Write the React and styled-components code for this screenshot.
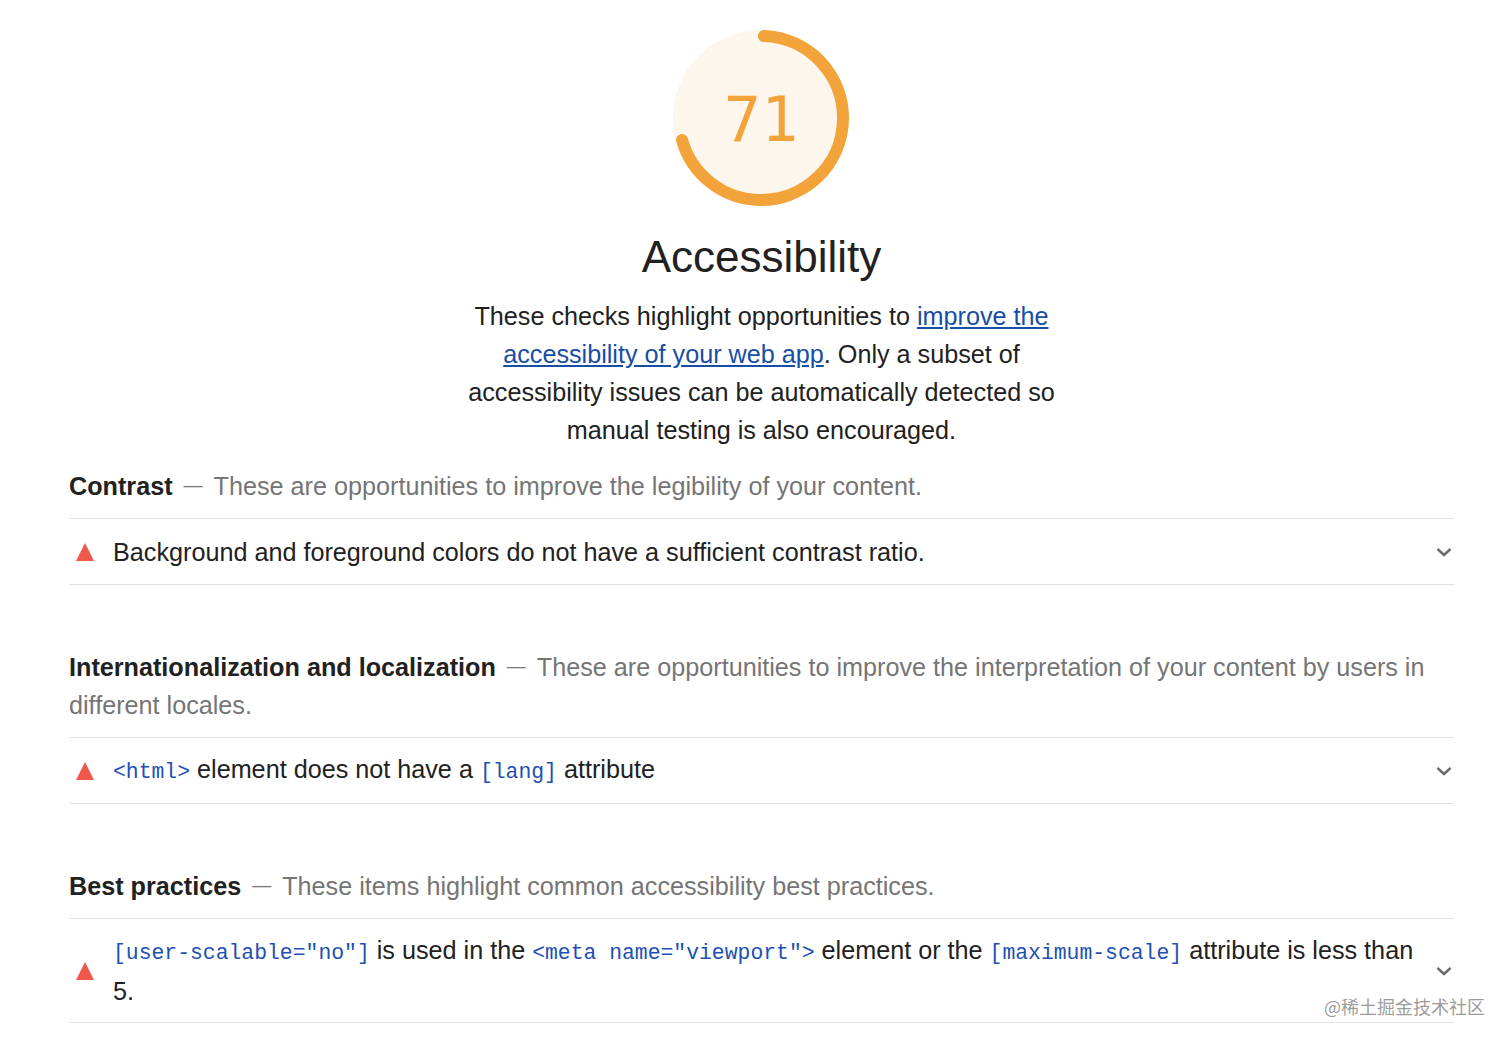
import React from "react";
import styled, { createGlobalStyle } from "styled-components";

const Global = createGlobalStyle`
  html, body { margin: 0; padding: 0; background: #fff; }
  body { font-family: "Liberation Sans", Arial, sans-serif; color: #212121; }
`;

const Page = styled.main`
  position: relative;
  box-sizing: border-box;
  width: 1512px;
  height: 1045px;
  overflow: hidden;
  padding: 29px 58px 0 69px;
  font-size: 25.2px;
  line-height: 38px;
`;

const Header = styled.header`
  display: flex;
  flex-direction: column;
  align-items: center;
  margin-bottom: 18px;
`;

const Gauge = styled.div`
  position: relative;
  width: 178px;
  height: 178px;
  margin-right: 2px;
`;

const GaugeValue = styled.div`
  position: absolute;
  inset: 0;
  display: flex;
  align-items: center;
  justify-content: center;
  padding: 3px 0 0 1px;
  font-family: "DejaVu Sans Mono", monospace;
  font-size: 62px;
  line-height: 1;
  color: #f2a33a;
`;

const Title = styled.h1`
  margin: 24px 0 0;
  font-size: 44px;
  font-weight: 400;
  line-height: 52px;
  color: #212121;
`;

const Description = styled.p`
  margin: 14px 0 0;
  width: 600px;
  text-align: center;
`;

const Link = styled.a`
  color: #174ea6;
  text-decoration: underline;
`;

const Section = styled.section`
  margin-bottom: 63px;
`;

const SectionHead = styled.div`
  padding-bottom: 13px;
  border-bottom: 1px solid #e0e0e0;
`;

const SectionName = styled.strong`
  font-weight: 700;
  color: #212121;
`;

const Dash = styled.span`
  display: inline-block;
  margin: 0 11px;
  font-size: 19px;
  line-height: 1;
  vertical-align: 4px;
  color: #757575;
`;

const SectionNote = styled.span`
  color: #757575;
`;

const Row = styled.div`
  display: flex;
  align-items: center;
  padding: ${(p) => (p.$hasCode ? "12px 0 12px" : "14px 0 13px")};
  border-bottom: 1px solid #e0e0e0;
`;

const Warn = styled.svg`
  flex: none;
  width: 18px;
  height: 18px;
  margin: 0 19px 0 7px;
`;

const RowText = styled.div`
  flex: 1;
  padding-right: 15px;
`;

const Code = styled.code`
  font-family: "Liberation Mono", monospace;
  font-size: 21.4px;
  color: #1c50b4;
`;

const Chevron = styled.svg`
  flex: none;
  width: 20px;
`;

const Watermark = styled.div`
  position: absolute;
  right: 27px;
  top: 994px;
  font-family: "Noto Sans CJK SC", sans-serif;
  font-size: 18px;
  line-height: 24px;
  color: rgba(110, 110, 110, 0.7);
`;

const Triangle = () => (
  <Warn viewBox="0 0 18 18"><polygon points="9,0 18,18 0,18" fill="#f0584c" /></Warn>
);

const Caret = () => (
  <Chevron viewBox="0 0 20 20" height="20">
    <path d="M3.5 7l6.5 6 6.5-6" fill="none" stroke="#6a6a6a" strokeWidth="2.4" />
  </Chevron>
);

export default function App() {
  return (
    <Page>
      <Global />
      <Header>
        <Gauge>
          <svg width="178" height="178" viewBox="0 0 178 178">
            <circle cx="89" cy="89" r="88" fill="#fdf6ec" />
            <circle
              cx="89"
              cy="89"
              r="82"
              fill="none"
              stroke="#f2a33a"
              strokeWidth="12"
              strokeLinecap="round"
              strokeDasharray={`${2 * Math.PI * 82 * 0.7} 1000`}
              transform="rotate(-88 89 89)"
            />
          </svg>
          <GaugeValue>71</GaugeValue>
        </Gauge>
        <Title>Accessibility</Title>
        <Description>
          These checks highlight opportunities to <Link href="#">improve the accessibility of your web app</Link>. Only a subset of accessibility issues can be automatically detected so manual testing is also encouraged.
        </Description>
      </Header>

      <Section>
        <SectionHead>
          <SectionName>Contrast</SectionName>
          <Dash>—</Dash>
          <SectionNote>These are opportunities to improve the legibility of your content.</SectionNote>
        </SectionHead>
        <Row>
          <Triangle />
          <RowText>Background and foreground colors do not have a sufficient contrast ratio.</RowText>
          <Caret />
        </Row>
      </Section>

      <Section>
        <SectionHead>
          <SectionName>Internationalization and localization</SectionName>
          <Dash>—</Dash>
          <SectionNote>These are opportunities to improve the interpretation of your content by users in different locales.</SectionNote>
        </SectionHead>
        <Row $hasCode>
          <Triangle />
          <RowText><Code>&lt;html&gt;</Code> element does not have a <Code>[lang]</Code> attribute</RowText>
          <Caret />
        </Row>
      </Section>

      <Section>
        <SectionHead>
          <SectionName>Best practices</SectionName>
          <Dash>—</Dash>
          <SectionNote>These items highlight common accessibility best practices.</SectionNote>
        </SectionHead>
        <Row $hasCode>
          <Triangle />
          <RowText><Code>[user-scalable="no"]</Code> is used in the <Code>&lt;meta name="viewport"&gt;</Code> element or the <Code>[maximum-scale]</Code> attribute is less than 5.</RowText>
          <Caret />
        </Row>
      </Section>

      <Watermark>@稀土掘金技术社区</Watermark>
    </Page>
  );
}
